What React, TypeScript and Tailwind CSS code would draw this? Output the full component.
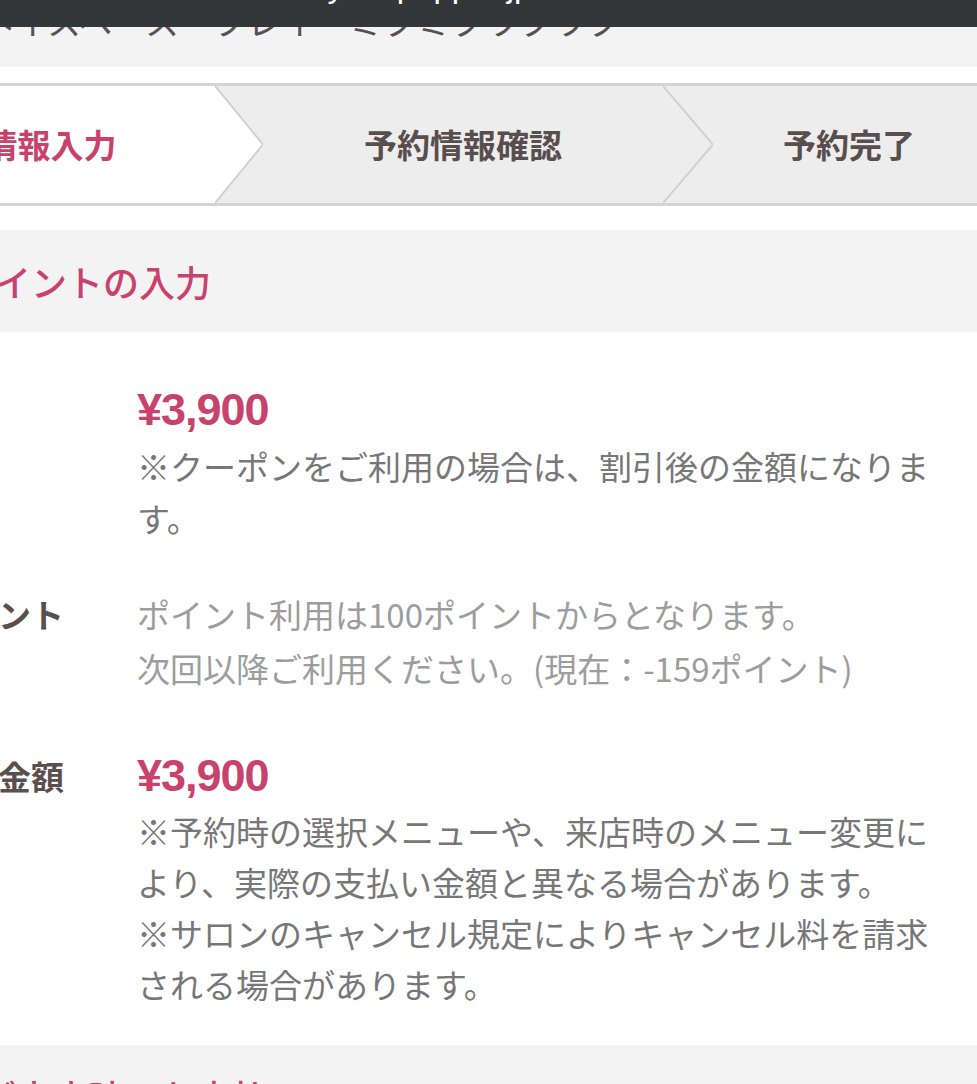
const notesCoupon = ['※クーポンをご利用の場合は、割引後の金額になります。'];
const notesTotal = [
  '※予約時の選択メニューや、来店時のメニュー変更により、実際の支払い金額と異なる場合があります。',
  '※サロンのキャンセル規定によりキャンセル料を請求される場合があります。',
];

function Price() {
  return (
    <p className="h-[60px] font-['Liberation_Sans',Arial,sans-serif] text-[45px] font-bold leading-[60px] tracking-[-1px] text-[#c8426b]">
      ¥3,900
    </p>
  );
}

function Row({ label, children, className }: { label: string; children: React.ReactNode; className: string }) {
  return (
    <div className={`flex ${className}`}>
      <div className="-ml-[134px] w-[271px] shrink-0 text-[33px] font-bold text-[#5b4e4e]">{label}</div>
      <div className="w-[808px] shrink-0">{children}</div>
    </div>
  );
}

export default function App() {
  return (
    <div className="h-[1084px] w-[977px] overflow-hidden bg-white font-['Noto_Sans_CJK_JP',sans-serif]">
      {/* browser url bar, mostly off the top */}
      <div className="h-[27px] overflow-hidden bg-[#33373a]">
        <p className="-mt-[31px] pl-[245px] font-['Liberation_Sans',Arial,sans-serif] text-[33px] leading-[33px] text-white">
          beauty.hotpepper.jp
        </p>
      </div>

      {/* salon name, clipped */}
      <div className="h-[40px] overflow-hidden bg-[#f3f3f3]">
        <p className="-mt-[23px] -ml-[20px] whitespace-nowrap text-[34px] leading-[34px] text-[#5b5050]">
          ネイスペース　ブレイ　ミクミクワクワク
        </p>
      </div>

      <div className="h-[16px]" />

      {/* steps */}
      <div className="border-y-[3px] border-[#d4d4d4]">
        <div className="-ml-[210px] flex h-[117px] text-[33px] font-bold">
          <div className="flex w-[425px] shrink-0 items-center justify-center bg-white pl-[30px] text-[#c8426b]">
            予約情報入力
          </div>
          <svg width="48" height="117" viewBox="0 0 48 117" className="shrink-0 bg-[#ededed]">
            <polygon points="0,0 48,58.5 0,117" fill="#fff" />
            <polyline points="0,0 48,58.5 0,117" fill="none" stroke="#d0d0d0" strokeWidth="2" />
          </svg>
          <div className="flex w-[400px] shrink-0 items-center justify-center bg-[#ededed] text-[#594e4e]">
            予約情報確認
          </div>
          <svg width="50" height="117" viewBox="0 0 50 117" className="shrink-0 bg-[#ededed]">
            <polyline points="0,0 50,58.5 0,117" fill="none" stroke="#d0d0d0" strokeWidth="2" />
          </svg>
          <div className="flex w-[272px] shrink-0 items-center justify-center bg-[#ededed] text-[#594e4e]">
            予約完了
          </div>
        </div>
      </div>

      {/* coupon / point section */}
      <div className="mt-[24px] flex h-[102px] items-center bg-[#f3f3f3]">
        <p className="-ml-[221px] whitespace-nowrap text-[36px] font-medium text-[#c8426b]">クーポン・ポイントの入力</p>
      </div>

      <Row label="料金" className="pt-[48px]">
        <Price />
        {notesCoupon.map((n) => (
          <p key={n} className="text-[33px] leading-[52px] text-[#777]">{n}</p>
        ))}
      </Row>

      <Row label="利用ポイント" className="pt-[43px] leading-[54px]">
        <p className="text-[33px] leading-[54px] text-[#9d9d9d]">
          ポイント利用は100ポイントからとなります。
          <br />
          次回以降ご利用ください。(現在：-159ポイント)
        </p>
      </Row>

      <Row label="お支払い金額" className="pt-[51px] leading-[60px]">
        <Price />
        {notesTotal.map((n) => (
          <p key={n} className="text-[33px] leading-[51px] text-[#777]">{n}</p>
        ))}
      </Row>

      {/* next section, cut off */}
      <div className="mt-[35px] flex h-[102px] items-center bg-[#f3f3f3]">
        <p className="-ml-[20px] whitespace-nowrap text-[36px] font-medium text-[#c8426b]">ご来店時のお支払い</p>
      </div>
    </div>
  );
}
